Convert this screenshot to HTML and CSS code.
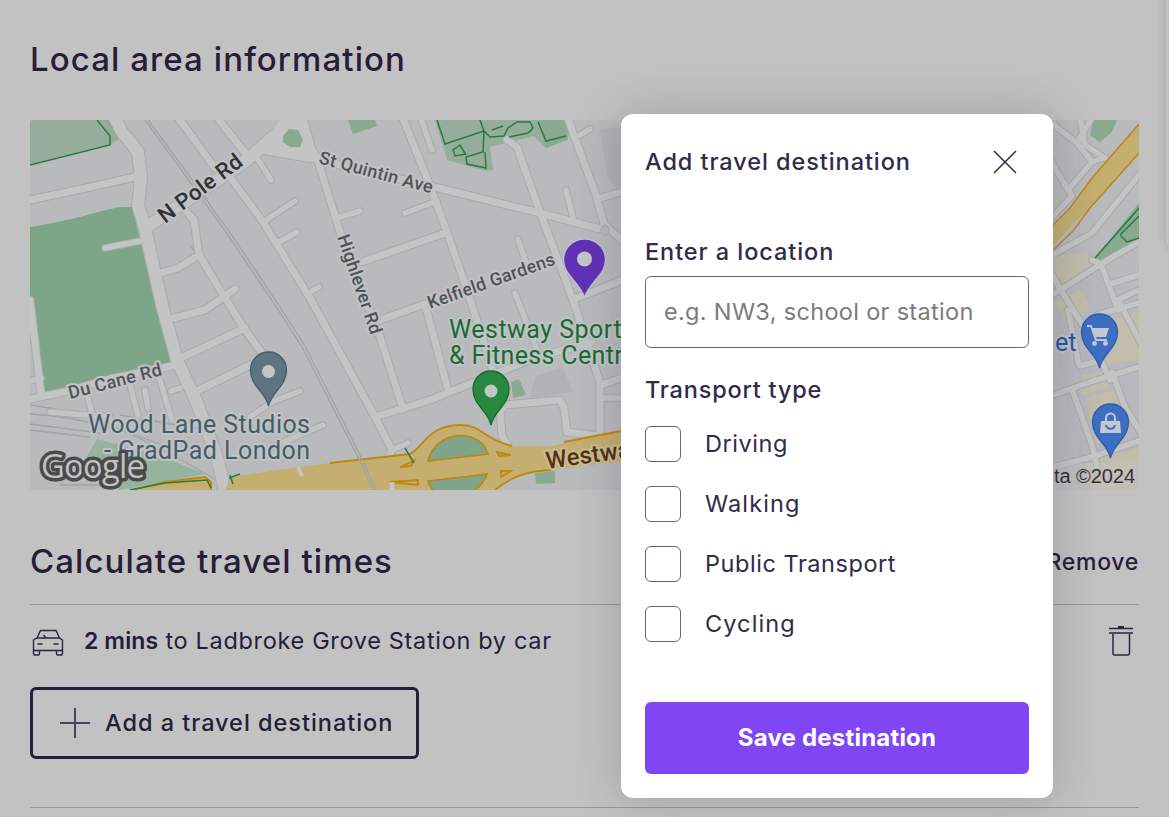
FILE: index.html
```html
<!DOCTYPE html>
<html lang="en">
<head>
<meta charset="utf-8">
<title>Local area information</title>
<link rel="stylesheet" href="styles.css">
</head>
<body>
<main class="page">
  <h2 class="heading">Local area information</h2>
  <svg class="map" viewBox="30 120 1109 370" role="img" aria-label="Map">
    <defs>
      <g id="wide">
        <path d="M112 112L122 132L138 152L141 178L138 205L145 228L162 305L177 360L197 403L217 457L226 495"/>
        <path d="M148 226L227 174L247 160L290 122"/>
      </g>
      <g id="mid">
        <path d="M25 201L77 190L135 177M25 400L60 393L110 379L172 366M30 300L41 394"/>
        <path d="M177 116L215 168M216 116L245 153M225 170L263 222L310 298L375 417L392 450L385 465"/>
        <path d="M317 158L340 232L380 337L403 409M317 160L430 186L540 213L600 229"/>
        <path d="M402 116L427 178L447 232L467 290L493 371M507 140L517 147L540 212L573 300L600 383L600 435"/>
        <path d="M567 116L597 198L604 224L625 243M597 199L625 191M600 385L625 377"/>
        <path d="M362 262L445 233M375 417L430 400L497 373L537 357L592 342M380 320L425 304L448 390"/>
        <path d="M502 436L500 412L505 405L560 400L564 408L567 432L600 436M502 436L508 445"/>
        <path d="M185 210L194 220L199 255L222 293L245 330L265 357M160 273L178 268L199 255M174 318L205 310L235 289M183 357L245 328M195 392L250 365M577 298L625 279"/>
      </g>
      <g id="slim">
        <path d="M263 222L295 201M277 243L297 232M306 294L319 287M257 158L271 180M340 217L360 211M405 213L437 201M573 218L566 190M518 239L527 266M515 293L537 350M392 450L408 443M420 116L432 150M580 135L590 129M603 398L625 398"/>
        <path d="M105 248L140 241M130 385L138 416M160 380L172 420M88 398L92 414M145 390L148 408M171 391L180 388M50 412L110 417M250 417L272 402L300 391M265 450L323 425M30 381L41 378"/>
      </g>
      <g id="city">
        <path d="M1050 122L1077 143L1092 118M1077 143L1092 162L1103 158M1092 162L1068 190M1050 160L1072 196L1045 225M1080 118L1085 145L1105 158M1045 259L1092 233L1139 175"/>
        <path d="M1092 260L1101 264L1139 242M1101 264L1118 310M1101 264L1062 289L1045 299M1052 275L1070 305L1092 340L1110 380M1110 284L1139 275M1115 301L1139 290"/>
        <path d="M1045 398L1090 382L1142 366M1073 392L1092 445L1098 470M1112 372L1124 405L1142 435M1045 469L1092 457L1142 440M1080 366L1098 361M1068 310L1079 365M1097 315L1142 302M1118 300L1142 345"/>
      </g>
      <path id="pin" d="M0 27C-3 12-18 8-18-9A18 18 0 0 1 18-9C18 8 3 12 0 27Z"/>
    </defs>
    <rect x="30" y="120" width="1109" height="370" fill="#b9babc"/>
    <path d="M1050 240L1095 255L1139 300V490H1085L1060 370L1050 290Z" fill="#b7b7bd"/>
    <path d="M1052 257L1085 252L1093 262L1060 290ZM1055 303L1080 290L1090 306L1072 330ZM1095 325L1139 310V360L1105 366ZM1082 375L1108 371V388L1082 395ZM1086 398L1114 390L1130 430L1095 444ZM1080 466L1139 448V490H1092Z" fill="#c1bdaa"/>
    <g class="park">
      <path d="M30 227C75 220 98 211 120 207L132 207L140 240L171 364L125 374L43 394L30 310Z" fill="#7da688"/>
      <path d="M30 120H110L120 139L109 145L30 165Z" fill="#96ad9b"/>
      <path d="M106 120L118 139L119 133L112 120Z"/>
      <path d="M435 120H570L568 140L546 148L534 136L490 147L493 170L485 171L447 160Z" fill="#96ad9b"/>
      <path d="M538 120H566L568 139L546 148Z"/>
      <path d="M348 120H375L377 126L353 134Z"/>
      <path d="M511 382L519 379L526 395L513 398ZM535 473L555 471V483L536 484Z"/>
      <path d="M97 439L160 456L205 474L120 490L85 460Z" fill="#95b39d"/>
      <path d="M1093 120H1117L1112 132L1100 142L1090 135Z"/>
      <path d="M1095 258L1139 203V245L1107 262Z"/>
    </g>
    <path d="M535 376L563 368L573 392L530 398ZM600 130L621 126V195L608 178Z" fill="#b1b2b6"/>
    <g class="minor-rail"><path d="M30 405C90 412 140 435 220 482M30 414C90 417 140 435 200 460M30 424L100 433M30 430L90 437M190 245L230 300M120 415L205 430M60 485H100V470"/></g>
    <g class="case"><use href="#slim" stroke-width="7.5"/><use href="#mid" stroke-width="9"/><use href="#city" stroke-width="7.5"/><use href="#wide" stroke-width="14"/><path d="M283 118H307L315 148L321 160L310 162L263 154L247 159Z" stroke-width="2"/></g>
    <g class="road"><use href="#slim" stroke-width="5.5"/><use href="#mid" stroke-width="7"/><use href="#city" stroke-width="5.5"/><use href="#wide" stroke-width="12"/></g>
    <path d="M281 119H307L315 148L322 160L310 162L263 154L247 159Z" fill="#c3c4c4"/>
    <path d="M283 136L289 129L298 130L303 140L300 147L290 147L283 142Z" fill="#89aa90"/>
    <ellipse cx="605" cy="230" rx="4" ry="5" fill="#b9babc" stroke="#a8aaac"/>
    <g class="motorway">
      <path d="M128 491L165 482L205 477L211 482V491Z"/>
      <path d="M230 477L300 467L330 463L410 454C424 447 428 425 461 425C482 425 484 440 512 446L552 446L621 430V461L552 470C525 471 510 478 495 492H225Z" stroke="none"/>
      <path d="M330 463L410 454C424 447 428 425 461 425C482 425 484 440 512 446M564 442L621 431M495 490C510 478 525 471 552 470" fill="none"/>
      <path d="M400 467L414 461L411 466ZM390 482L418 480V485ZM497 452L511 455L499 456ZM501 471L511 471L501 477Z"/>
    </g>
    <path d="M428 461C435 430 480 427 488 454L428 461ZM428 481L487 474C483 486 470 497 455 497C440 497 432 494 428 481Z" fill="#7fa48a" stroke="#c0870b" stroke-width="1.6"/>
    <g class="rail"><path d="M143 117L190 182L230 238L275 305L302 347L363 467L375 495"/><path d="M146 117L193 181L233 237L278 304L305 346L366 467L378 495"/></g>
    <path d="M298 467L302 476" fill="none" stroke="#c3c4c4" stroke-width="4"/>
    <path d="M392 482V490" stroke="#c3c4c4" stroke-width="5"/>
    <path d="M1045 235L1070 210L1092 178L1139 124V153L1090 208L1073 224L1045 255Z" fill="#c4ae70"/>
    <path d="M1045 233L1070 208L1092 178L1139 124M1045 258L1073 231L1090 208L1139 153" fill="none" stroke="#bd8720" stroke-width="1.5"/>
    <g class="trail">
      <path d="M97 120L110 136V145L30 165"/>
      <path d="M437 120L445 144L484 131L480 120M484 131L490 137L504 136L508 128L517 122H530L533 128L528 133L509 137M484 132L483 152L466 157L467 164L486 168L485 152M466 155L460 145L453 150L455 156L466 154M538 122L546 141L566 136M492 130L503 126"/>
      <path d="M130 490L165 483L207 480L211 488M405 448L414 463M230 475L233 484M229 478L240 474"/>
      <path d="M1095 258L1139 208M1120 235L1139 216M1120 235L1127 242L1139 238"/>
    </g>
    <g class="label label-road">
      <text transform="translate(165 224) rotate(-37)" textLength="99" font-size="22" fill="#303133">N Pole Rd</text>
      <text transform="translate(318 163) rotate(15)" textLength="117" font-size="18">St Quintin Ave</text>
      <text transform="translate(337 237) rotate(71)" textLength="104" font-size="18">Highlever Rd</text>
      <text transform="translate(430 309) rotate(-19.5)" textLength="134" font-size="18">Kelfield Gardens</text>
      <text transform="translate(70 399) rotate(-14.5)" textLength="96" font-size="18">Du Cane Rd</text>
      <text transform="translate(547 469) rotate(-8)" textLength="97" font-size="24" class="label-motorway">Westway</text>
    </g>
    <g class="label" font-size="25">
      <g fill="#176c35"><text x="449" y="338" textLength="186">Westway Sports</text><text x="449" y="364" textLength="187">&amp; Fitness Centre</text></g>
      <g fill="#445c67"><text x="88" y="433" textLength="222">Wood Lane Studios</text><text x="104" y="459" textLength="206">- GradPad London</text></g>
      <text x="1055" y="351" fill="#2359a8">et</text>
    </g>
    <g stroke-width="1.3">
      <use href="#pin" x="268.500" y="379" fill="#5d7482" stroke="#465b68"/><circle cx="268.500" cy="371.500" r="6.500" fill="#c5c5c5"/>
      <use href="#pin" x="491" y="398" fill="#27883f" stroke="#176a2e"/><circle cx="491" cy="391" r="6.500" fill="#c5c5c5"/>
      <path d="M584.500 297C578 280 563.500 275 563.500 260A21 21 0 0 1 605.500 260C605.500 275 591 280 584.500 297Z" fill="#6032b8" stroke="#c4c0cb"/><circle cx="584.500" cy="259" r="7.500" fill="#c5c5c5"/>
      <use href="#pin" x="1099.500" y="341" fill="#3c6fc3" stroke="#305da8"/>
      <use href="#pin" x="1110.500" y="431" fill="#3c6fc3" stroke="#305da8"/>
    </g>
    <path d="M1087 326H1091L1096 340H1107" fill="none" stroke="#c4c7ce" stroke-width="2"/>
    <path d="M1092 328H1109L1106 337H1095Z" fill="#c4c7ce"/><circle cx="1094.500" cy="343.500" r="2.400" fill="#c4c7ce"/><circle cx="1105.500" cy="343.500" r="2.400" fill="#c4c7ce"/>
    <path d="M1101 421H1120L1121 433H1100Z" fill="#c4c7ce"/><path d="M1106 421V418A4.500 4.500 0 0 1 1115 418V421" fill="none" stroke="#c4c7ce" stroke-width="2"/><path d="M1106 425C1107 430 1114 430 1115 425" fill="none" stroke="#3c6fc3" stroke-width="1.800"/>
    <rect x="1050" y="463" width="89" height="27" fill="#c2c2c2" opacity=".5"/>
    <text class="copyright" x="1054" y="483" textLength="81">ta ©2024</text>
    <text class="google" x="41" y="478" textLength="104">Google</text>
  </svg>

  <div class="section-head">
    <h2 class="heading">Calculate travel times</h2>
    <a class="remove">Remove</a>
  </div>
  <div class="journey">
    <svg class="car" viewBox="0 0 32 28"><path d="M1.500 11L5 9H27.500L30.500 11V21.500H1.500ZM5 9L8.500 1.500H24L27.500 9M1.500 21V24.500Q1.500 26 3 26H6Q7.500 26 7.500 24.500V22M30.500 21V24.500Q30.500 26 29 26H26Q24.500 26 24.500 24.500V22M5.500 15H10.500M21.500 15H26.500M11.500 6L13.500 8.500"/></svg>
    <p class="journey-text"><b>2 mins</b> to Ladbroke Grove Station by car</p>
    <svg class="bin" viewBox="0 0 24 30"><path d="M0 2.500H24M0 7H24" stroke-width="1.700"/><path d="M9 1H15" stroke-width="2"/><path d="M4 8V27Q4 29 6 29H18.500Q20.500 29 20.500 27V8" stroke-width="1.500"/></svg>
  </div>
  <div class="add-row">
    <button class="add"><svg class="plus" viewBox="0 0 30 30"><path d="M15 0V30M0 15H30"/></svg><span>Add a travel destination</span></button>
  </div>
</main>
<div class="side-card"></div>

<section class="dialog">
  <header class="dialog-head">
    <h3 class="label-text">Add travel destination</h3>
    <svg class="close" viewBox="0 0 24 24"><path d="M1 1L23 23M23 1L1 23"/></svg>
  </header>
  <label class="label-text location" for="place">Enter a location</label>
  <input class="place" id="place" placeholder="e.g. NW3, school or station">
  <h4 class="label-text transport">Transport type</h4>
  <div class="options">
    <label class="option"><input class="box" type="checkbox"><span>Driving</span></label>
    <label class="option"><input class="box" type="checkbox"><span class="walking">Walking</span></label>
    <label class="option"><input class="box" type="checkbox"><span>Public Transport</span></label>
    <label class="option"><input class="box" type="checkbox"><span class="cycling">Cycling</span></label>
  </div>
  <button class="save">Save destination</button>
</section>
</body>
</html>
```
FILE: styles.css
```css
* { box-sizing: border-box; }
body {
  margin: 0;
  height: 817px;
  overflow: hidden;
  position: relative;
  background: #c2c2c2;
  color: #261d38;
  font: 400 23.5px/36px Inter, sans-serif;
  letter-spacing: .55px;
}
h2, h3, h4, p { margin: 0; }
svg { display: block; flex: none; }
.page { padding: 36px 30px 0; }
.heading { font-size: 33px; font-weight: 550; line-height: 46px; padding-bottom: 2px; letter-spacing: 1.08px; }
.map { width: 1109px; height: 370px; margin-top: 36px; border-radius: 2px; }
.case { fill: none; stroke: #a8aaac; stroke-linecap: round; stroke-linejoin: round; }
.road { fill: none; stroke: #c3c4c4; stroke-linecap: round; stroke-linejoin: round; }
.park { fill: #89aa90; }
.rail, .minor-rail { fill: none; stroke: #a1a3a5; stroke-width: 1.3; }
.motorway { fill: #c4ae70; stroke: #c0870b; stroke-width: 1.8; }
.trail { fill: none; stroke: #257d42; stroke-width: 1.5; }
.label { font-family: Roboto, sans-serif; letter-spacing: 0; font-weight: 400; paint-order: stroke; stroke: #c0c2c3; stroke-width: 4px; stroke-linejoin: round; }
.label-road { fill: #505356; font-weight: 500; }
.label-motorway { fill: #56320d; stroke: #c9bd99; }
.copyright { font: 20px "Liberation Sans", sans-serif; letter-spacing: 0; fill: #333; }
.google { font: 500 33px "Open Sans", sans-serif; letter-spacing: 0; fill: #c2c2c2; stroke: #4a4a4a; stroke-width: 7px; stroke-linejoin: round; paint-order: stroke; }
.section-head { display: flex; justify-content: space-between; align-items: flex-start; height: 115px; padding-top: 48px; border-bottom: 1px solid #98989b; }
.remove { font-size: 23px; font-weight: 550; line-height: 48px; letter-spacing: .7px; }
.journey { display: flex; align-items: center; height: 72px; padding: 0 6px 0 2px; }
.car { width: 32px; height: 28px; margin-top: 4px; fill: none; stroke: #2d2540; stroke-width: 1.4; }
.journey-text { margin-left: 20px; flex: 1; letter-spacing: .67px; }
.journey-text b { font-size: 23px; font-weight: 600; letter-spacing: .1px; }
.bin { width: 24px; height: 30px; fill: none; stroke: #2d2540; }
.add-row { height: 131px; padding-top: 10px; border-bottom: 1px solid #98989b; }
.add { display: flex; align-items: center; width: 389px; height: 72px; padding: 0 0 0 27px; border: 3px solid #261d38; border-radius: 6px; background: none; color: inherit; font: inherit; font-weight: 550; letter-spacing: .97px; white-space: nowrap; }
.plus { width: 30px; height: 30px; margin-right: 15px; stroke: #4b435a; stroke-width: 2; }
.side-card { position: absolute; top: -20px; left: 1166px; width: 30px; height: 267px; border-radius: 6px; background: #c2c2c2; box-shadow: 0 0 10px rgba(0,0,0,.16); }
.dialog { position: absolute; top: 114px; left: 621px; width: 432px; height: 684px; padding: 30px 24px 24px; display: flex; flex-direction: column; border-radius: 12px; background: #fff; color: #33294a; box-shadow: 0 0 48px rgba(35,30,50,.22); }
.dialog-head { display: flex; justify-content: space-between; align-items: center; height: 36px; padding-right: 12px; }
.label-text { font-size: 23.5px; font-weight: 550; line-height: 36px; letter-spacing: .93px; }
.location { margin-top: 54px; }
.close { width: 24px; height: 24px; stroke: #33294a; stroke-width: 1.5; }
.place { height: 72px; margin-top: 6px; padding: 0 18px 2px; border: 1px solid #6b647c; border-radius: 6px; background: #fff; font: inherit; letter-spacing: .32px; }
.place::placeholder { color: #7b7b7b; }
.transport { margin-top: 24px; letter-spacing: .8px; }
.options { display: grid; gap: 24px; margin-top: 18px; }
.option { display: flex; align-items: center; gap: 24px; height: 36px; }
.walking, .cycling { letter-spacing: 1.1px; }
.box { appearance: none; width: 36px; height: 36px; margin: 0; border: 1px solid #6b647c; border-radius: 6px; }
.save { height: 72px; margin-top: auto; border: 0; border-radius: 6px; background: #8046f3; color: #fff; font: inherit; font-size: 24px; font-weight: 700; letter-spacing: .2px; }
```
